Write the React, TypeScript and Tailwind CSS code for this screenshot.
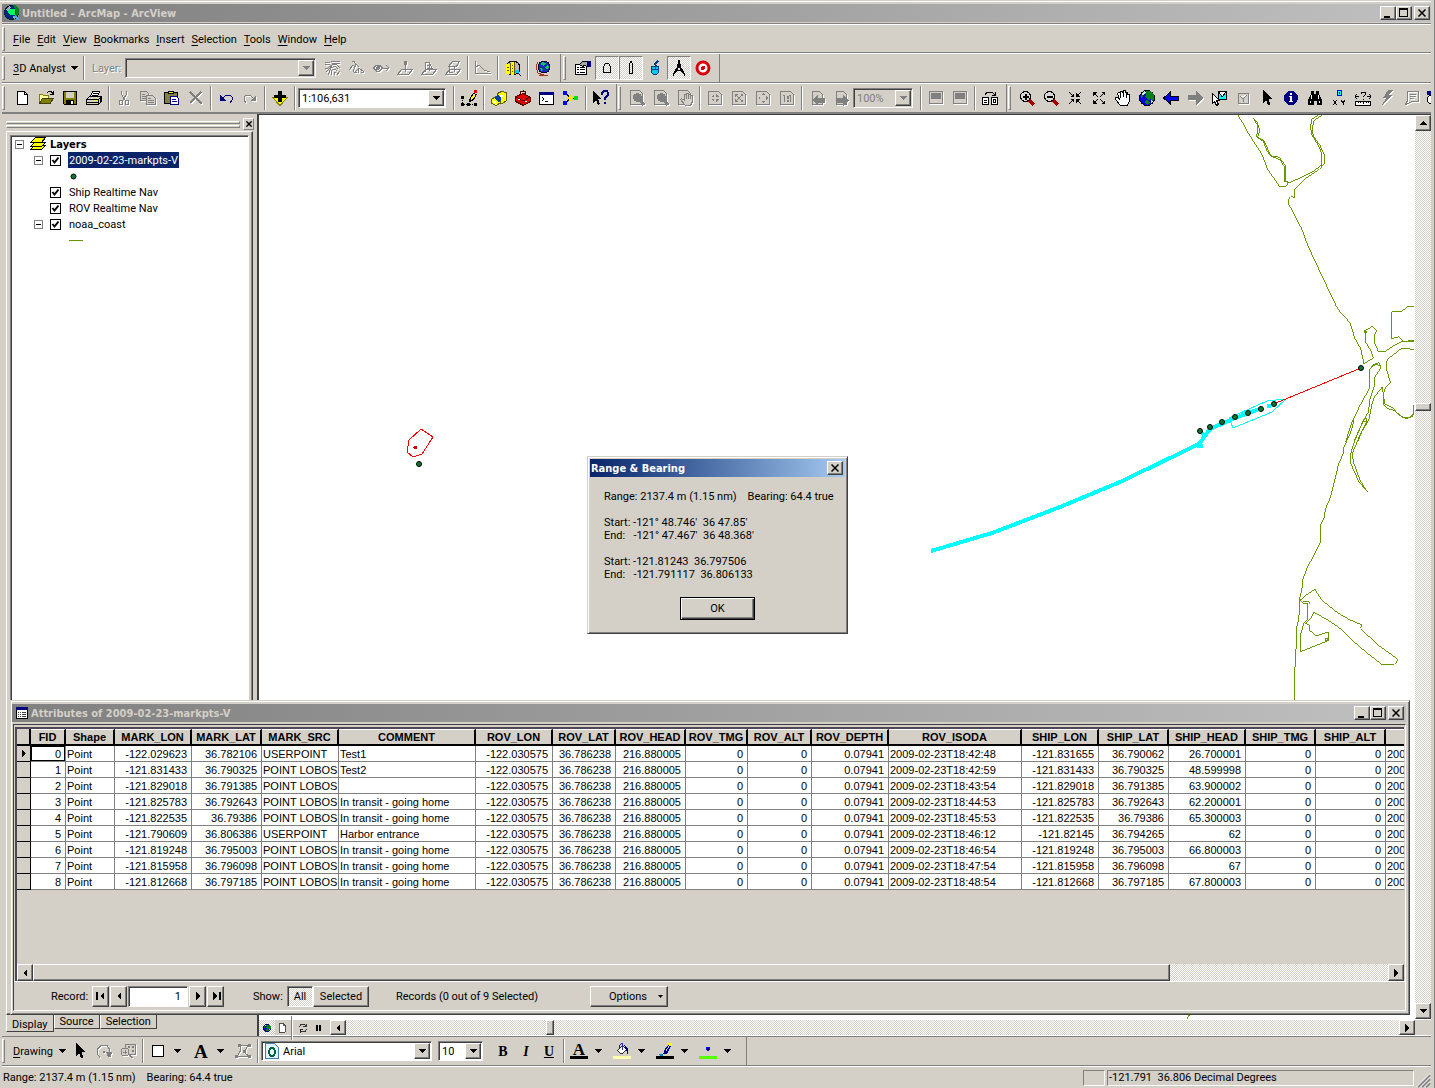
import { useState } from "react";
import type { ReactNode } from "react";

const RAISED =
  "border border-b-[#404040] border-l-white border-r-[#404040] border-t-white bg-[#d4d0c8] shadow-[inset_-1px_-1px_0_#808080]";
const SUNKEN =
  "border border-b-white border-l-[#808080] border-r-white border-t-[#808080] shadow-[inset_1px_1px_0_#404040]";
const DITHER =
  "bg-[repeating-conic-gradient(#fff_0_25%,#d4d0c8_0_50%)] bg-[length:2px_2px]";

const page = <path d="M3.5 1.5h7l3 3v10h-10z" fill="#d4d0c8" stroke="#808080" />;
const magnifier = (
  <>
    <path d="M10 10l5 5" stroke="#a00" strokeWidth="3" />
    <circle cx="6.5" cy="6.5" r="5" fill="#d8d8d8" stroke="#000" />
  </>
);
const globe = (
  <>
    <circle cx="8" cy="8" r="7.5" fill="#0000d8" stroke="#000" />
    <path d="M7 1h5l3 4v4l-2 2-1-2-3 1-1-2-2-1 1-2-2-2zM3 3l2 1-1 3-2 1zM7 10l3 1 1 2-3 2-2-2z" fill="#008020" />
    <path d="M2 4l3-3 2 1-3 3zM12 10l2 1-2 3z" fill="#c8e8d8" />
  </>
);

const ICONS: Record<string, ReactNode> = {
  app: (
    <>
      <circle cx="7.5" cy="7.5" r="7" fill="#00287c" stroke="#002040" />
      <path d="M9 0h3l3 4v5l-4 3 1-6z" fill="#008020" />
      <path d="M1 5l4-4 2 1-3 4zM9 11l3 1-2 2z" fill="#aaa" />
      <path d="M5 4h6v6H6l-2-3z" fill="#00ff60" />
      <path d="M11 11l4 4" stroke="#4af" strokeWidth="2" />
    </>
  ),
  contour: (
    <path d="M0 2h3l2 1M6 1l4 1 5-1M0 5l4-1 2 2-5 3M7 3l4 1 4-1M1 12l4-4 3-4 4 1 3 3M3 15l3-7 4-2 3 3M6 15l1-5 3-1 2 2M9 15v-3l2 1M12 15l3-4M0 8h2" fill="none" stroke="#808080" />
  ),
  steep: <path d="M0 10l4-5 2 2M4 1l6 6M3 2l3-1M5 13l5-5 5 4M7 4l-3 8M9 9v4M12 12h3M8 12h-2" fill="none" stroke="#808080" />,
  sight: (
    <>
      <path d="M0.5 8l3-3h3l3 3-3 3h-3zM10 8h6M13 5l3 3-3 3" fill="none" stroke="#808080" />
      <circle cx="5" cy="8" r="2" fill="#808080" />
    </>
  ),
  pin: (
    <>
      <path d="M0.5 14.5l4-5h11l-4 5zM8.5 2v10" fill="none" stroke="#808080" />
      <circle cx="8.5" cy="3" r="2" fill="#808080" />
    </>
  ),
  pinLine: (
    <path d="M0.5 14.5l4-5h11l-4 5zM4.5 2v10M4 2h4l4 8M6 5h4M6 8h5M8 3v8" fill="none" stroke="#808080" />
  ),
  pinArea: <path d="M0.5 14.5l4-5h11l-4 5zM3.5 6.5l4-5h7l-3 5zM4 7v5h4M9 7v5" fill="none" stroke="#808080" />,
  profile: <path d="M0.5 1v12.500h15M1 7l3-2 5 5 6 2" fill="none" stroke="#808080" />,
  analysis: (
    <>
      <circle cx="8" cy="8" r="7" fill="#b8b8b8" stroke="#000" />
      <path d="M1 4h4v10H1zM6 2h3v13H6z" fill="#ffff00" />
      <path d="M5.500 3v11M9.500 2v12M2 7.500h2M2 10.500h2M7 5.500h1M7 8.500h1M7 11.500h1" fill="none" stroke="#605000" />
      <path d="M10 10h4v3h-4z" fill="#00ccff" />
      <path d="M13 13l3 3" stroke="#0000c0" />
    </>
  ),
  scene: (
    <>
      <path d="M3 2l-2 4 2 7 5 2h5M4 15h9M8 14v2" fill="none" stroke="#a03020" />
      <circle cx="9" cy="7" r="6" fill="#1030b0" stroke="#003" />
      <path d="M7 2l4 1-2 3-3-1zM12 5l2 2-2 3-2-2zM5 8l3 1-1 3z" fill="#0c6" />
    </>
  ),
  props: (
    <>
      <path d="M0.500 4.500h11v10h-11z" fill="#fff" stroke="#000" />
      <path d="M2 7.500h2M5 7.500h5M2 9.500h2M5 9.500h5M2 12.500h2M5 12.500h5" stroke="#000" />
      <path d="M4.500 4.500l3-3h5v5l-3-1-2 1z" fill="#a8a8a8" stroke="#000" />
      <path d="M13 1h3v6h-3z" fill="#000080" />
    </>
  ),
  ship: <path d="M4.500 12.500v-6l2-3h3l2 3v6z" fill="none" stroke="#000" />,
  rov: <path d="M6.500 13.500v-9l1-3h1l1 3v9z" fill="none" stroke="#000" />,
  mouse: (
    <>
      <path d="M11 1l-3 3 1 2" fill="none" stroke="#004080" strokeWidth="2" />
      <path d="M4.500 6.500h7v6l-2 2h-3l-2-2z" fill="#00c8e8" stroke="#004080" />
      <path d="M5 9.500h6M8.500 6v3" stroke="#0040a0" />
    </>
  ),
  compass: (
    <>
      <path d="M7 0h2v4H7zM6 4h4v4H6z" fill="#000" />
      <path d="M7 7l-4 7M9 7l4 7" stroke="#000" strokeWidth="2" />
      <path d="M4 10.500h8M2.500 13v3M13.500 13v3" stroke="#000" />
    </>
  ),
  target: (
    <>
      <circle cx="8" cy="8" r="6" fill="#fff" stroke="#d8000c" strokeWidth="3" shapeRendering="auto" />
      <circle cx="8" cy="8" r="2" fill="#d8000c" />
    </>
  ),
  newDoc: (
    <>
      <path d="M3.500 1.500h7l3 3v10h-10z" fill="#fff" stroke="#000" />
      <path d="M10.500 1.500v3h3" fill="none" stroke="#000" />
    </>
  ),
  open: (
    <>
      <path d="M1.500 13.500v-9h3l1 1h5v3" fill="#ff9" stroke="#808000" />
      <path d="M1.500 13.500l3-5h11l-3.500 5z" fill="#808000" stroke="#404000" />
      <path d="M9 3l2-1.500h2l2 2M15.500 1v3.500H12" fill="none" stroke="#000" />
    </>
  ),
  save: (
    <>
      <path d="M1.500 1.500h13v13h-12l-1-1z" fill="#808000" stroke="#000" />
      <path d="M4 2h8v6H4z" fill="#d4d0c8" />
      <path d="M4 10h8v4H4z" fill="#000" />
      <path d="M9 11h2v3H9z" fill="#fff" />
    </>
  ),
  print: (
    <>
      <path d="M4.500 6.500l2-5h7l-2 5z" fill="#fff" stroke="#000" />
      <path d="M7 3h5M6 5h5" stroke="#000" />
      <path d="M0.500 9.500l3-3h12v5l-3 3h-12z" fill="#d4d0c8" stroke="#000" />
      <path d="M1 9.500h11.500v5M12.500 9.500l3-3M1 12h11M14.500 8v5" fill="none" stroke="#000" />
      <path d="M8 10h3v1H8z" fill="#ff0" />
    </>
  ),
  cut: (
    <path d="M5.500 1v3l4 7M10.500 1v3l-4 7M3.500 10.500h3v4h-3zM9.500 10.500h3v4h-3z" fill="none" stroke="#808080" />
  ),
  copy: (
    <>
      <path d="M0.500 1.500h6l2 2v7h-8z" fill="#d4d0c8" stroke="#808080" />
      <path d="M6.500 5.500h6l3 3v6h-9z" fill="#d4d0c8" stroke="#808080" />
      <path d="M2 4.500h3M2 6.500h4M2 8.500h4M8 8.500h3M8 10.500h6M8 12.500h6" stroke="#808080" />
    </>
  ),
  paste: (
    <>
      <path d="M0.500 2.500h13v11h-13z" fill="#808040" stroke="#000" />
      <path d="M4.500 3.500v-2h5v2z" fill="#ff0" stroke="#000" />
      <path d="M6.500 6.500h6l2 2v6h-8z" fill="#fff" stroke="#000080" />
      <path d="M8 9.500h4M8 11.500h5" stroke="#000080" />
    </>
  ),
  del: <path d="M2 2l12 12M13 2L2 13" fill="none" stroke="#808080" strokeWidth="2" />,
  undo: (
    <>
      <path d="M5 8l3-3h4l2 2v3l-2 3" fill="none" stroke="#000080" />
      <path d="M2 5v6h6z" fill="#000080" />
    </>
  ),
  redo: (
    <>
      <path d="M11 8L8 5H4L2 7v3l2 3" fill="none" stroke="#808080" />
      <path d="M14 5v6H8z" fill="#808080" />
    </>
  ),
  add: (
    <>
      <path d="M0.500 7.500h15l-7.500 8z" fill="#ffff00" stroke="#808000" />
      <path d="M6 1h4v4h4v3h-4v4H6V8H2V5h4z" fill="#000" />
    </>
  ),
  editor: (
    <>
      <path d="M1.500 6v8.500H15" fill="none" stroke="#000" strokeDasharray="1 1" />
      <path d="M0 6h3v3H0zM0 13h3v3H0zM6 13h3v3H6zM13 13h3v3h-3z" fill="#000" />
      <path d="M8.500 11.500l1-4 3-4 3 1-3 5z" fill="#ff0" stroke="#000" />
      <path d="M13 0h3v3h-3z" fill="#e00000" />
    </>
  ),
  catalog: (
    <>
      <path d="M6.500 3.500l4-2 5 1v8l-4 3-5-1z" fill="#ffff00" stroke="#606000" />
      <path d="M0.500 9.500l4-3 5 2v4l-4 3-5-2z" fill="#ffff00" stroke="#606000" />
      <path d="M4 7l3-2 3 2v4l-3 1-2-2z" fill="#0040a0" />
      <path d="M2 11h3v2H2zM9 5h3v2H9z" fill="#fff" />
    </>
  ),
  toolbox: (
    <>
      <path d="M0.500 6.500l8-3 7 4v4l-7 4-8-4z" fill="#e00000" stroke="#600000" />
      <path d="M1 7l7 4 7-4M5.500 4V2l3-1 2 1v3" fill="none" stroke="#500000" />
      <path d="M3 9h2v1H3zM10 11h2v1h-2z" fill="#fff" />
    </>
  ),
  cmd: (
    <>
      <path d="M0.500 2.500h14v12h-14z" fill="#fff" stroke="#000" />
      <path d="M0 2h15v3H0z" fill="#000080" />
      <path d="M3 7l2 2-2 2" fill="none" stroke="#000" />
      <path d="M6 11h3v1H6z" />
    </>
  ),
  model: (
    <>
      <path d="M4 4l3 4-3 4M7 8h6" fill="none" stroke="#000" />
      <path d="M0 1h4v4H0zM0 11h4v4H0z" fill="#0000f0" />
      <path d="M4 8l3-3 3 3-3 3z" fill="#ffe000" />
      <circle cx="13" cy="8" r="2.500" fill="#00e000" />
    </>
  ),
  help: (
    <>
      <path d="M0 1v12l3-3 2 5 2-1-2-5h4z" fill="#000" />
      <path d="M9 5V3l2-2h3l1 2v2l-3 3v2M12 12v2" fill="none" stroke="#000080" strokeWidth="2" />
    </>
  ),
  pageZoom: (
    <>
      <path d="M1.500 0.500h9l3 3v11h-12z" fill="#d4d0c8" stroke="#808080" />
      <circle cx="8.500" cy="7.500" r="4.500" fill="#808080" />
      <path d="M11 10l4 5" stroke="#808080" strokeWidth="3" />
    </>
  ),
  pagePan: (
    <>
      <path d="M1.500 0.500h9l3 3v11h-12z" fill="#d4d0c8" stroke="#808080" />
      <path d="M8.500 15.500l-5-6 1-1 3 2V4.500h2v-1h2v1h2v1h2v6l-2 4z" fill="#d4d0c8" stroke="#808080" />
      <path d="M9.500 5v4M11.500 5v4M13.500 6v3" stroke="#808080" />
    </>
  ),
  pageIn: (
    <>
      <path d="M1.500 1.500h10l3 3v10h-13z" fill="#d4d0c8" stroke="#808080" />
      <path d="M7 4v3H4zM9 4v3h3zM4 9h3v3zM9 9h3l-3 3z" fill="#808080" />
    </>
  ),
  pageOut: (
    <>
      <path d="M1.500 1.500h10l3 3v10h-13z" fill="#d4d0c8" stroke="#808080" />
      <path d="M4 4h3L4 7zM9 4h3v3zM4 9v3h3zM12 9v3H9z" fill="#808080" />
      <path d="M5 5l6 6M11 5l-6 6" stroke="#808080" />
    </>
  ),
  pageFull: (
    <>
      <path d="M1.500 1.500h10l3 3v10h-13z" fill="#d4d0c8" stroke="#808080" />
      <path d="M6 5l2-2 2 2zM6 11l2 2 2-2zM5 6L3 8l2 2zM11 6l2 2-2 2z" fill="#808080" />
    </>
  ),
  pageOne: (
    <>
      <path d="M1.500 1.500h10l3 3v10h-13z" fill="#d4d0c8" stroke="#808080" />
      <path d="M4 5.500h1.500V12M8 6h1v2H8zM8 10h1v1H8zM10 5.500h1.500V12" fill="none" stroke="#808080" />
    </>
  ),
  pageBack: (
    <>
      {page}
      <path d="M3 10l6-5v3h7v5H9v3z" fill="#808080" />
    </>
  ),
  pageNext: (
    <>
      {page}
      <path d="M16 10l-6-5v3H3v5h7v3z" fill="#808080" />
    </>
  ),
  draft: (
    <>
      <path d="M1.500 1.500h13v12h-13z" fill="#d4d0c8" stroke="#808080" />
      <path d="M3 3h10v6H3z" fill="#808080" />
    </>
  ),
  swap: (
    <>
      <path d="M0.500 7.500h6v7h-6zM9.500 7.500h6v7h-6z" fill="#fff" stroke="#000" />
      <path d="M2 10.500h3M2 12.500h3M11.500 9.500h2v3h-2zM3 5l2-3h5l3 3M13.500 2v3.500H10" fill="none" stroke="#000" />
    </>
  ),
  zoomIn: (
    <>
      {magnifier}
      <path d="M4 6h5v1H4zM6 4h1v5H6z" stroke="#000" />
    </>
  ),
  zoomOut: (
    <>
      {magnifier}
      <path d="M4 6h5v1H4z" stroke="#000" />
    </>
  ),
  fixedIn: (
    <>
      <path d="M7 3v4H3zM9 3v4h4zM3 9h4v4zM9 9h4l-4 4z" fill="#000" />
      <path d="M2 2l4 4M14 2l-4 4M2 14l4-4M14 14l-4-4" stroke="#000" />
    </>
  ),
  fixedOut: (
    <>
      <path d="M2 2h4L2 6zM10 2h4v4zM2 10v4h4zM14 10v4h-4z" fill="#000" />
      <path d="M3 3l4 4M13 3L9 7M3 13l4-4M13 13l-4-4" stroke="#000" />
    </>
  ),
  pan: (
    <>
      <path d="M5.500 15.500l-5-6v-2h2l2 2-2-6 1-1h1l1 1V1.500h2v1l1-2h2v2h2v2h2v6l-2 5z" fill="#fff" stroke="#000" />
      <path d="M5.500 3v5M8.500 2v5M11.500 3v5" stroke="#000" />
    </>
  ),
  full: globe,
  back: <path d="M0.500 8l7-6v4h8v4h-8v4z" fill="#0000f0" stroke="#000" />,
  next: <path d="M16 8L9 1v4H1v5h8v5z" fill="#808080" />,
  selFeat: (
    <>
      <path d="M7.500 1.500h8v8h-8z" fill="#0ff" stroke="#000" />
      <path d="M8 2l3 5 4-5" fill="#fff" stroke="#000" />
      <path d="M1.500 3.500v10l2-2 2 4 2-1-2-4h3z" fill="#fff" stroke="#000" />
    </>
  ),
  clearSel: <path d="M3.500 3.500h10v10h-10zM5 6l3 3 4-4M8 9v3" fill="#d4d0c8" stroke="#808080" />,
  pointer: <path d="M4 0v13l3-3 2 5h2V13L9.500 9H13z" fill="#000" />,
  info: (
    <>
      <circle cx="8" cy="8" r="7" fill="#000080" />
      <path d="M7 3h2v2H7zM6 6h3v5h1v1H6v-1h1V7H6z" fill="#fff" />
    </>
  ),
  find: (
    <>
      <path d="M4 1h3v3h2V1h3v3l3 6v5h-5v-4H7v4H1v-5l3-6z" fill="#000" />
      <path d="M4.500 5v4M3.500 11v2M11.500 5v4M12.500 11v2" stroke="#fff" />
    </>
  ),
  goXY: (
    <>
      <path d="M6.500 0.500h4v5h-4z" fill="#0ff" stroke="#00f" />
      <path d="M8 2h1v2H8z" fill="#000" />
      <path d="M2 10l4 5M6 10l-4 5M10 10l2 3M14 10l-2 3v2" fill="none" stroke="#000" />
    </>
  ),
  measure: (
    <>
      <path d="M0 6.500h4M2 4L0 6.500 2 9M12 6.500h4M14 4l2 2.500L14 9M6 4V2h4v3L8 7M8 9v1" fill="none" stroke="#000" />
      <path d="M0.500 11.500h15v4H0.500z" fill="#fff" stroke="#000" />
      <path d="M3.500 11v2M5.500 11v2M8.500 11v3M11.500 11v2M13.500 11v2" stroke="#000" />
    </>
  ),
  bolt: <path d="M9 0h5l-4 5h3L3 15l4-7H4z" fill="#808080" />,
  popup: <path d="M4.500 1.500h11v10h-6l-7 3 2-4zM7 4.500h6M7 6.500h6M7 8.500h4" fill="none" stroke="#808080" />,
  clock: (
    <>
      <path d="M0 1h9v4H0z" fill="#000080" />
      <circle cx="5" cy="9.500" r="4.500" fill="#fff" stroke="#000" />
    </>
  ),
  rotate: (
    <>
      <path d="M4 14.500L1.500 11V6l4-4h5l3 4v3" fill="none" stroke="#808080" />
      <path d="M10 9h6l-1 5h-3zM7 8h2v2H7z" fill="#808080" />
    </>
  ),
  zoomSel: (
    <>
      <path d="M5.500 1.500h10v10h-10z" fill="#d4d0c8" stroke="#808080" />
      <path d="M8 3h2v2H8zM12 3h2v2h-2zM12 7h2v2h-2z" fill="#808080" />
      <circle cx="5" cy="9" r="4" fill="#d4d0c8" stroke="#808080" />
      <path d="M3 9.500h4M5.500 7v4M9 12l4 3" stroke="#808080" />
    </>
  ),
  rect: <path d="M2.500 2.500h11v11h-11z" fill="#fff" stroke="#000" />,
  vertices: (
    <>
      <path d="M5 2.500h8L9 9l5 4.500H2l3-5z" fill="none" stroke="#808080" />
      <path d="M3 1h3v3H3zM13 1h3v3h-3zM8 7h3v3H8zM13 12h3v3h-3zM0 12h3v3H0z" fill="#808080" />
    </>
  ),
  fill: (
    <>
      <path d="M2.500 9.500l6-6 5 5-5 5h-2z" fill="#fff" stroke="#000" />
      <path d="M5.500 7V2l3-1.500v8" fill="none" stroke="#000080" />
      <path d="M11 3l4 3v8l-2-5z" fill="#000080" />
    </>
  ),
  brush: (
    <>
      <path d="M6 13l2-6 4-5 3 2-3 7-3 3z" fill="#000080" />
      <path d="M11 0h5v4h-3z" fill="#ffff00" />
      <path d="M9 10l4-6" stroke="#fff" />
      <path d="M0 14h3v1h3" fill="none" stroke="#0080c0" strokeWidth="2" />
    </>
  ),
  marker: (
    <>
      <circle cx="8" cy="7" r="2.500" fill="#00f" />
      <path d="M7 6h2v2H7z" fill="#000060" />
    </>
  ),
  layers: (
    <>
      <path d="M0.500 13.500l4-4h11l-4 4z" fill="#ff0" stroke="#000" />
      <path d="M0.500 10.500l4-4h11l-4 4z" fill="#ff0" stroke="#000" />
      <path d="M0.500 6.500l5-5h10l-4 5z" fill="#ff0" stroke="#000" />
    </>
  ),
  table: (
    <>
      <path d="M0 0h16v16H0z" fill="#000" />
      <path d="M1 4h13v11H1z" fill="#fff" />
      <path d="M0 0h16v4H0z" fill="#000080" />
      <path d="M2 7h12M2 10h12M2 13h12" stroke="#000" strokeDasharray="2 1" />
    </>
  ),
  font: (
    <>
      <path d="M1.500 0.500h9l4 4v11h-13z" fill="#e4f0ff" stroke="#4080c0" />
      <ellipse cx="8" cy="9" rx="3" ry="4" fill="none" stroke="#063" strokeWidth="2" />
    </>
  ),
  refresh: <path d="M3 7l2-4h5l2 2M12 2v4H8M13 9l-2 4H6l-2-2M4 14v-4h4" fill="none" stroke="#000" />,
  pause: <path d="M4 4h2v8H4zM8 4h2v8H8z" fill="#000" />,
};

function Icon({ name, className = "size-4" }: { name: string; className?: string }) {
  return (
    <svg viewBox="0 0 16 16" shapeRendering="crispEdges" className={`shrink-0 ${className}`} aria-hidden="true">
      {ICONS[name]}
    </svg>
  );
}

function Tool({ name, off, pressed }: { name: string; off?: boolean; pressed?: boolean }) {
  return (
    <button
      type="button"
      aria-label={name}
      disabled={off}
      className={`flex size-6 shrink-0 items-center justify-center ${
        pressed ? `${DITHER} border border-b-white border-l-[#808080] border-r-white border-t-[#808080]` : ""
      }`}
    >
      <Icon name={name} className={off ? "size-4 drop-shadow-[1px_1px_0_#fff]" : "size-4"} />
    </button>
  );
}

function Tools({ names, off }: { names: string[]; off?: boolean }) {
  return (
    <>
      {names.map((name, i) => (
        <Tool key={i} name={name} off={off} />
      ))}
    </>
  );
}

function Sep() {
  return (
    <div className="flex h-6 w-1.5 shrink-0 justify-center">
      <div className="w-0.5 border-l border-r border-l-[#808080] border-r-white" />
    </div>
  );
}

function Grip() {
  return (
    <div className="h-6 w-[3px] shrink-0 border border-b-[#808080] border-l-white border-r-[#808080] border-t-white" />
  );
}

function Caret({ color = "#000" }: { color?: string }) {
  return (
    <svg viewBox="0 0 8 4" className="h-1 w-2 shrink-0" shapeRendering="crispEdges" aria-hidden="true">
      <path d="M0 0h8L4 4z" fill={color} />
    </svg>
  );
}

const TURN = { up: "rotate-180", down: "", left: "rotate-90", right: "-rotate-90" };

function ScrollButton({ dir, className }: { dir: keyof typeof TURN; className: string }) {
  return (
    <button type="button" aria-label={`Scroll ${dir}`} className={`flex shrink-0 items-center justify-center ${RAISED} ${className}`}>
      <span className={`flex ${TURN[dir]}`}>
        <Caret />
      </span>
    </button>
  );
}

function Combo({
  label,
  value,
  off,
  icon,
  className,
}: {
  label: string;
  value: string;
  off?: boolean;
  icon?: string;
  className: string;
}) {
  return (
    <div className={`flex h-5 shrink-0 items-stretch p-px ${SUNKEN} ${off ? "bg-[#d4d0c8] text-[#808080]" : "bg-white"} ${className}`}>
      {icon && <Icon name={icon} className="mx-px size-4" />}
      <select aria-label={label} disabled={off} className="min-w-0 flex-1 appearance-none bg-transparent pl-0.5 outline-none">
        <option>{value}</option>
      </select>
      <span className={`flex w-4 shrink-0 items-center justify-center ${RAISED}`}>
        <Caret color={off ? "#808080" : "#000"} />
      </span>
    </div>
  );
}

function WindowButtons() {
  const base = `flex h-3.5 w-4 items-center justify-center ${RAISED}`;
  return (
    <div className="flex shrink-0 items-center">
      <button type="button" aria-label="Minimize" className={base}>
        <svg viewBox="0 0 10 10" className="size-2.5">
          <path d="M1 8h6v2H1z" />
        </svg>
      </button>
      <button type="button" aria-label="Maximize" className={base}>
        <svg viewBox="0 0 10 10" className="size-2.5" shapeRendering="crispEdges">
          <path d="M0 0h9v9H0zM1 2v6h7V2z" fillRule="evenodd" />
        </svg>
      </button>
      <button type="button" aria-label="Close" className={`ml-0.5 ${base}`}>
        <Cross />
      </button>
    </div>
  );
}

function Cross() {
  return (
    <svg viewBox="0 0 8 8" className="size-2" aria-hidden="true">
      <path d="M0.500 0.500l7 7M7.500 0.500l-7 7" stroke="#000" strokeWidth="1.500" />
    </svg>
  );
}

const MENUS = ["File", "Edit", "View", "Bookmarks", "Insert", "Selection", "Tools", "Window", "Help"];

function MenuLabel({ text }: { text: string }) {
  return (
    <span>
      <span className="underline underline-offset-2">{text[0]}</span>
      {text.slice(1)}
    </span>
  );
}

function LayerRow({ name, open, selected }: { name: string; open?: boolean; selected?: boolean }) {
  return (
    <div className="flex h-4 items-center pl-[23px]">
      <span className="w-4 shrink-0">{open && <Expander />}</span>
      <label className="flex h-4 items-center">
        <span className="relative size-[11px]">
          <input type="checkbox" defaultChecked className="block size-[11px] appearance-none border border-black bg-white" />
          <svg viewBox="0 0 11 11" className="pointer-events-none absolute inset-0 size-[11px]" aria-hidden="true">
            <path d="M2.500 5l2 2.500 4-5" fill="none" stroke="#000" strokeWidth="2" />
          </svg>
        </span>
        <span className={`ml-[7px] flex h-4 items-center px-px ${selected ? "bg-[#0a246a] text-white" : ""}`}>{name}</span>
      </label>
    </div>
  );
}

function Expander() {
  return (
    <svg viewBox="0 0 9 9" className="size-[9px]" shapeRendering="crispEdges" aria-hidden="true">
      <path d="M0.500 0.500h8v8h-8z" fill="#fff" stroke="#808080" />
      <path d="M2 4h5v1H2z" />
    </svg>
  );
}

function Contents() {
  return (
    <aside className="flex w-[255px] shrink-0 flex-col pl-1.5">
      <div className="flex h-4 items-end gap-[3px] pr-px">
        <div className="flex flex-1 flex-col gap-px pb-0.5">
          <div className="h-[3px] border border-b-[#808080] border-r-[#808080] border-white" />
          <div className="h-[3px] border border-b-[#808080] border-r-[#808080] border-white" />
        </div>
        <button type="button" aria-label="Close contents" className="flex h-3 w-[11px] items-center justify-center border border-b-[#808080] border-l-white border-r-[#808080] border-t-white">
          <svg viewBox="0 0 8 8" className="size-1.5" aria-hidden="true">
            <path d="M0.500 0.500l7 7M7.500 0.500l-7 7" stroke="#000" strokeWidth="2" />
          </svg>
        </button>
      </div>
      <div className={`mr-0.5 mt-px flex flex-1 flex-col p-[3px] ${RAISED}`}>
        <div className={`flex-1 bg-white ${SUNKEN}`}>
          <div className="flex h-4 items-center pl-1">
            <Expander />
            <Icon name="layers" className="ml-1.5 size-4" />
            <span className="ml-1 font-['DejaVu_Sans_Condensed','Noto_Sans',sans-serif] font-bold">Layers</span>
          </div>
          <LayerRow name="2009-02-23-markpts-V" open selected />
          <div className="flex h-4 items-center pl-[59px]">
            <svg viewBox="0 0 7 7" className="size-[7px]" aria-hidden="true">
              <circle cx="3.500" cy="3.500" r="2.500" fill="#087830" stroke="#000" />
            </svg>
          </div>
          <LayerRow name="Ship Realtime Nav" />
          <LayerRow name="ROV Realtime Nav" />
          <LayerRow name="noaa_coast" open />
          <div className="flex h-4 items-center pl-[58px]">
            <div className="h-px w-3.5 bg-[#669900]" />
          </div>
        </div>
      </div>
      <div className="flex h-[21px] items-start">
        {["Display", "Source", "Selection"].map((tab, i) => (
          <button
            type="button"
            key={tab}
            className={`border border-t-0 border-b-[#404040] border-l-white border-r-[#404040] px-[5px] ${i === 0 ? "h-[17px] pt-0.5" : "h-3.5"}`}
          >
            {tab}
          </button>
        ))}
      </div>
    </aside>
  );
}

const MARKS = [
  [1200, 431],
  [1210, 427],
  [1222, 422],
  [1235, 417],
  [1248, 413],
  [1261, 409],
  [1274, 404],
  [1361, 368],
  [419, 464],
];

function MapView() {
  return (
    <svg viewBox="259 115 1155 904" className="block h-[904px] w-[1155px] shrink-0" shapeRendering="crispEdges" aria-label="Map">
      {/* coastline, digitised at three units per pixel */}
      <g fill="none" stroke="#669900" strokeWidth="3">
        <g transform="translate(1180 112) scale(0.33333)">
          <path d="M173 8L190 36L200 56L225 95L245 125L262 170L298 223H318L325 212L313 207L313 165L300 143L272 132L262 118L250 88L232 76L240 55L230 28L220 18" />
          <path d="M220 18L234 42L230 74L252 86L272 131L298 136L316 160L318 208L330 212" />
          <path d="M415 8L396 22L391 45L396 70L412 95L426 125V158L400 178L330 212" />
          <path d="M425 10L402 26L396 50L400 72L420 100L434 130V155L418 172L372 203L345 232V256L332 254L325 262L327 278L365 350L385 405L402 440L425 490L470 585L482 602L510 632L525 680L542 710L552 755L580 738L572 715L558 692L556 656L577 643L590 655L583 672L585 695L595 718H615L650 696L668 688L702 686" />
          <path d="M553 656h6v6h-6z" />
          <path d="M702 583H685L662 600H635V680L658 674L670 690H702" />
          <path d="M702 712L665 709L622 742L618 765L631 812L618 825L610 845L614 875L640 888L655 908L680 920L696 914L702 905" />
          <path d="M607 825L612 860V880L625 890L645 896L665 915L685 918L700 906V880" />
          <path d="M497 990L512 940L540 880L568 830V775L580 758L598 752L602 768L585 795L582 825L570 860L565 900L548 930L530 970L522 990" />
          <path d="M574 764L590 756L600 762M607 825L583 855L575 880L566 925L545 960L533 990M552 920h8v8h-8z" />
        </g>
        <g transform="translate(1180 420) scale(0.33333)">
          <path d="M522 0L512 38L490 85V100L475 135L462 190L452 230L437 265L432 295L421 315V368L405 400L382 442L368 480L366 505L359 535V560L356 600L350 620V685L346 690V740L343 745V840" />
          <path d="M552 0L540 25L525 60L513 98L512 130L535 182L555 208L565 218M560 5L540 45L517 100L520 125L540 180L560 213" />
          <path d="M361 540L385 520L405 508L425 540L475 580L510 600L530 608L546 615L542 625L590 672L640 708L655 720L643 733H605L560 698L516 660L480 625L440 598L402 577L393 595L376 610L388 615L390 632L410 648L430 640L445 637V662L362 695L361 645L372 610L384 598L382 550H370L361 540" />
          <path d="M370 545H388V553M436 655h8v8h-8z" />
        </g>
      </g>
      <path d="M1187 1019l3-5" stroke="#669900" />
      <g fill="none" stroke="#00ffff">
        <path d="M931 551L992 533L1060 507L1120 482L1170 458L1199 444L1210 429L1235 418L1262 408M1267 406h4M1200 431l5 5M1197 446h6" strokeWidth="4" />
        <path d="M1229 418L1267 401L1286 399L1272 412L1233 428Z" />
      </g>
      <path d="M1276 403L1361 368M421 429L433 437L422 454L413 457L407 452L409 440Z" fill="none" stroke="#f00" />
      <circle cx="415.500" cy="447.500" r="2" fill="#c00" />
      {MARKS.map(([x, y]) => (
        <circle key={x} cx={x} cy={y} r="2.500" fill="#087830" stroke="#000" shapeRendering="auto" />
      ))}
    </svg>
  );
}

// "l" columns are left aligned, the rest are numbers
const COLUMNS: [string, string, string?][] = [
  ["FID", "w-[35px]"],
  ["Shape", "w-[49px]", "l"],
  ["MARK_LON", "w-[77px]"],
  ["MARK_LAT", "w-[70px]"],
  ["MARK_SRC", "w-[77px]", "l"],
  ["COMMENT", "w-[137px]", "l"],
  ["ROV_LON", "w-[77px]"],
  ["ROV_LAT", "w-[63px]"],
  ["ROV_HEAD", "w-[70px]"],
  ["ROV_TMG", "w-[62px]"],
  ["ROV_ALT", "w-[64px]"],
  ["ROV_DEPTH", "w-[77px]"],
  ["ROV_ISODA", "w-[133px]", "l"],
  ["SHIP_LON", "w-[77px]"],
  ["SHIP_LAT", "w-[70px]"],
  ["SHIP_HEAD", "w-[77px]"],
  ["SHIP_TMG", "w-[70px]"],
  ["SHIP_ALT", "w-[70px]"],
  ["", "w-[133px]", "l"],
];

const RECORDS = [
  ["-122.029623", "36.782106", "USERPOINT", "Test1", "18:42:48", "-121.831655", "36.790062", "26.700001"],
  ["-121.831433", "36.790325", "POINT LOBOS", "Test2", "18:42:59", "-121.831433", "36.790325", "48.599998"],
  ["-121.829018", "36.791385", "POINT LOBOS", "", "18:43:54", "-121.829018", "36.791385", "63.900002"],
  ["-121.825783", "36.792643", "POINT LOBOS", "In transit - going home", "18:44:53", "-121.825783", "36.792643", "62.200001"],
  ["-121.822535", "36.79386", "POINT LOBOS", "In transit - going home", "18:45:53", "-121.822535", "36.79386", "65.300003"],
  ["-121.790609", "36.806386", "USERPOINT", "Harbor entrance", "18:46:12", "-121.82145", "36.794265", "62"],
  ["-121.819248", "36.795003", "POINT LOBOS", "In transit - going home", "18:46:54", "-121.819248", "36.795003", "66.800003"],
  ["-121.815958", "36.796098", "POINT LOBOS", "In transit - going home", "18:47:54", "-121.815958", "36.796098", "67"],
  ["-121.812668", "36.797185", "POINT LOBOS", "In transit - going home", "18:48:54", "-121.812668", "36.797185", "67.800003"],
];

function cellsFor(r: string[], fid: number) {
  const [lon, lat, src, comment, time, shipLon, shipLat, shipHead] = r;
  return [
    String(fid), "Point", lon, lat, src, comment,
    "-122.030575", "36.786238", "216.880005", "0", "0", "0.07941",
    `2009-02-23T${time}`, shipLon, shipLat, shipHead, "0", "0", "200",
  ];
}

function AttributeTable() {
  return (
    <table className="w-[1501px] table-fixed border-separate border-spacing-0 font-['Liberation_Sans',Arial,sans-serif] text-[11px] leading-[14px]">
      <thead>
        <tr className="h-[17px]">
          <th className="w-3.5 border-b-2 border-r-2 border-black bg-[#d4d0c8] p-0" />
          {COLUMNS.map(([name, width], i) => (
            <th
              key={i}
              className={`overflow-hidden whitespace-nowrap border-b-2 border-r-2 border-t border-b-black border-r-black border-t-white bg-[#d4d0c8] p-0 text-center font-bold ${width}`}
            >
              {name}
            </th>
          ))}
        </tr>
      </thead>
      <tbody>
        {RECORDS.map((r, fid) => (
          <tr key={fid} className="h-4">
            <td className="border-b border-r border-b-black border-r-black bg-[#d4d0c8] p-0">
              {fid === 0 && (
                <span className="flex -rotate-90 justify-center">
                  <Caret />
                </span>
              )}
            </td>
            {cellsFor(r, fid).map((cell, i) => (
              <td
                key={i}
                className={`h-4 overflow-hidden whitespace-nowrap border-b border-r border-[#808080] bg-white py-0 ${
                  COLUMNS[i][2] ? "pl-px text-left" : "pr-1 text-right"
                } ${fid === 0 && i === 0 ? "shadow-[inset_0_0_0_1px_#000]" : ""}`}
              >
                {cell}
              </td>
            ))}
          </tr>
        ))}
      </tbody>
    </table>
  );
}

function AttributesWindow() {
  const [show, setShow] = useState("All");

  return (
    <section className="absolute bottom-[21px] left-[10px] right-[21px] flex h-[315px] flex-col border border-b-[#404040] border-l-[#d4d0c8] border-r-[#404040] border-t-[#d4d0c8] bg-[#d4d0c8] p-[3px] pl-px shadow-[inset_1px_1px_0_#fff,inset_-1px_-1px_0_#808080]">
      <header className="flex h-[18px] items-center bg-linear-to-r from-[#808080] to-[#c0c0c0] pl-1 pr-0.5">
        <Icon name="table" className="size-3" />
        <h2 className="ml-[3px] flex-1 font-['DejaVu_Sans_Condensed','Noto_Sans',sans-serif] font-bold text-[#d4d0c8]">
          Attributes of 2009-02-23-markpts-V
        </h2>
        <WindowButtons />
      </header>
      <div className="ml-px mt-0.5 flex min-h-0 flex-1 flex-col border border-b-white border-l-[#404040] border-r-white border-t-[#404040]">
        <div className="mt-0.5 ml-px mr-px flex min-h-0 flex-1 flex-col border-2 border-b-0 border-r-0 border-[#504858]">
          <div className="flex-1 overflow-hidden">
            <AttributeTable />
          </div>
          <div className={`flex h-[17px] ${DITHER}`}>
            <ScrollButton dir="left" className="w-4" />
            <div className={`w-[82%] ${RAISED}`} />
            <div className="flex-1" />
            <ScrollButton dir="right" className="w-4" />
          </div>
        </div>
        <div className="flex h-[29px] shrink-0 items-center border-t border-white pl-[37px]">
          <label htmlFor="record" className="w-[41px]">
            Record:
          </label>
          <button type="button" aria-label="First record" className={`flex h-[21px] w-[17px] items-center justify-center ${RAISED}`}>
            <span className="h-2 w-0.5 bg-black" />
            <span className="flex rotate-90">
              <Caret />
            </span>
          </button>
          <ScrollButton dir="left" className="ml-px h-[21px] w-[17px]" />
          <input
            id="record"
            defaultValue="1"
            className={`ml-px h-[21px] w-[60px] bg-white px-1.5 text-right outline-none ${SUNKEN}`}
          />
          <ScrollButton dir="right" className="ml-px h-[21px] w-[17px]" />
          <button type="button" aria-label="Last record" className={`ml-px flex h-[21px] w-[17px] items-center justify-center ${RAISED}`}>
            <span className="flex -rotate-90">
              <Caret />
            </span>
            <span className="h-2 w-0.5 bg-black" />
          </button>
          <span className="ml-[29px] w-[34px]">Show:</span>
          {["All", "Selected"].map((mode) => (
            <button
              type="button"
              key={mode}
              aria-pressed={show === mode}
              onClick={() => setShow(mode)}
              className={`h-[21px] ${mode === "All" ? "w-[26px]" : "w-14"} ${show === mode ? `${SUNKEN} ${DITHER}` : RAISED}`}
            >
              {mode}
            </button>
          ))}
          <span className="ml-[27px] w-[194px]">Records (0 out of 9 Selected)</span>
          <button type="button" className={`flex h-[21px] w-[78px] items-center justify-between pl-[18px] pr-1 ${RAISED}`}>
            Options
            <svg viewBox="0 0 5 3" className="h-[3px] w-[5px]" aria-hidden="true">
              <path d="M0 0h5L2.500 3z" />
            </svg>
          </button>
        </div>
      </div>
    </section>
  );
}

function RangeDialog({ onClose }: { onClose: () => void }) {
  return (
    <div
      role="dialog"
      aria-label="Range & Bearing"
      className="absolute left-[587px] top-[342px] flex h-[178px] w-[261px] flex-col border border-b-[#404040] border-l-[#d4d0c8] border-r-[#404040] border-t-[#d4d0c8] bg-[#d4d0c8] p-0.5 shadow-[inset_1px_1px_0_#fff,inset_-1px_-1px_0_#808080]"
    >
      <header className="flex h-[18px] shrink-0 items-center bg-linear-to-r from-[#0a246a] to-[#a6caf0] pl-px pr-0.5">
        <h2 className="flex-1 font-['DejaVu_Sans_Condensed','Noto_Sans',sans-serif] font-bold text-white">Range &amp; Bearing</h2>
        <button type="button" aria-label="Close" onClick={onClose} className={`flex h-3.5 w-4 items-center justify-center ${RAISED}`}>
          <Cross />
        </button>
      </header>
      <pre className="mt-[13px] pl-3.5 font-[Roboto,Tahoma,sans-serif] leading-[13px]">
        {`Range: 2137.4 m (1.15 nm)    Bearing: 64.4 true

Start: -121° 48.746'  36 47.85'
End:   -121° 47.467'  36 48.368'

Start: -121.81243  36.797506
End:   -121.791117  36.806133`}
      </pre>
      <button
        type="button"
        onClick={onClose}
        className="mx-auto mt-4 h-[23px] w-[75px] border border-black shadow-[inset_1px_1px_0_#fff,inset_-1px_-1px_0_#404040,inset_-2px_-2px_0_#808080]"
      >
        OK
      </button>
    </div>
  );
}

function ColorTool({ name, bar, letter }: { name: string; bar: string; letter?: string }) {
  return (
    <button type="button" aria-label={name} className="flex w-[43px] shrink-0 items-center gap-1.5">
      <span className="flex w-[18px] flex-col items-center">
        {letter ? (
          <span className="h-[13px] font-['Liberation_Serif',serif] text-[17px] font-bold leading-[13px]">{letter}</span>
        ) : (
          <Icon name={name} className="h-[13px] w-4" />
        )}
        <span className={`h-[3px] w-[18px] ${bar}`} />
      </span>
      <Caret />
    </button>
  );
}

export default function App() {
  const [dialog, setDialog] = useState(true);

  return (
    <div className="flex h-screen flex-col overflow-hidden border-r border-[#808080] bg-[#d4d0c8] pr-[3px] font-[Roboto,Tahoma,sans-serif] text-[11px] leading-[13px] text-black">
      <div className="mt-px h-[3px] shrink-0 border-t border-white" />
      <header className="ml-0.5 flex h-[18px] shrink-0 items-center bg-linear-to-r from-[#808080] to-[#c0c0c0] pl-0.5 pr-px">
        <Icon name="app" />
        <h1 className="ml-0.5 flex-1 font-['DejaVu_Sans_Condensed','Noto_Sans',sans-serif] font-bold text-[#d4d0c8]">
          Untitled - ArcMap - ArcView
        </h1>
        <WindowButtons />
      </header>
      <div className="ml-0.5 mt-px h-px shrink-0 bg-[#808080]" />

      <nav className="ml-0.5 flex h-[29px] shrink-0 items-center border-b border-t border-b-[#808080] border-t-white">
        <Grip />
        <div className="ml-2 flex gap-[7px] pt-0.5">
          {MENUS.map((menu) => (
            <button type="button" key={menu}>
              <MenuLabel text={menu} />
            </button>
          ))}
        </div>
      </nav>

      <div className="ml-0.5 flex h-[30px] shrink-0 items-center border-b border-t border-b-[#808080] border-t-white">
        <Grip />
        <button type="button" className="flex w-[76px] shrink-0 items-center justify-between pl-2 pr-[3px]">
          <MenuLabel text="3D Analyst" />
          <Caret />
        </button>
        <Sep />
        <span className="w-[38px] shrink-0 pl-[5px] text-[#808080] [text-shadow:1px_1px_0_#fff]">Layer:</span>
        <Combo label="Layer" value="" off className="mr-[5px] w-[191px]" />
        <Tools names={["contour", "steep", "sight", "pin", "pinLine", "pinArea"]} off />
        <Sep />
        <Tool name="profile" off />
        <Sep />
        <Tool name="analysis" />
        <Sep />
        <Tool name="scene" />
        <div className="ml-[5px] mr-0.5 h-full w-px shrink-0 bg-[#808080]" />
        <Grip />
        <div className="ml-[5px] flex h-full items-center border-r border-[#808080] pr-1">
          <Tool name="props" />
          <Tool name="ship" pressed />
          <Tool name="rov" pressed />
          <Tool name="mouse" />
          <Tool name="compass" pressed />
          <Tool name="target" />
        </div>
      </div>

      <div className="ml-0.5 flex h-[31px] shrink-0 items-center overflow-hidden border-b-2 border-t border-b-[#808080] border-t-white">
        <Grip />
        <div className="w-[5px] shrink-0" />
        <Tools names={["newDoc", "open", "save", "print"]} />
        <Sep />
        <Tools names={["cut", "copy"]} off />
        <Tool name="paste" />
        <Tool name="del" off />
        <Sep />
        <Tool name="undo" />
        <Tool name="redo" off />
        <Sep />
        <Tool name="add" />
        <Sep />
        <Combo label="Map scale" value="1:106,631" className="mr-[5px] w-[148px]" />
        <Sep />
        <Tool name="editor" />
        <Sep />
        <Tools names={["catalog", "toolbox", "cmd", "model"]} />
        <Sep />
        <Tool name="help" />
        <div className="ml-[3px] mr-px h-full w-px shrink-0 bg-[#808080]" />
        <Grip />
        <div className="w-1 shrink-0" />
        <Tools names={["pageZoom", "pageZoom", "pagePan"]} off />
        <Sep />
        <Tools names={["pageIn", "pageOut", "pageFull", "pageOne"]} off />
        <Sep />
        <Tools names={["pageBack", "pageNext"]} off />
        <Combo label="Page zoom" value="100%" off className="mr-[5px] w-[60px]" />
        <Sep />
        <Tools names={["draft", "draft"]} off />
        <Sep />
        <Tool name="swap" />
        <div className="ml-1 mr-px h-full w-px shrink-0 bg-[#808080]" />
        <Grip />
        <div className="w-1 shrink-0" />
        <Tools names={["zoomIn", "zoomOut", "fixedIn", "fixedOut", "pan", "full", "back"]} />
        <Tool name="next" off />
        <Tool name="selFeat" />
        <Tool name="clearSel" off />
        <Tools names={["pointer", "info", "find", "goXY", "measure"]} />
        <Tools names={["bolt", "popup"]} off />
        <Tool name="clock" />
      </div>

      <main className="relative flex min-h-0 flex-1">
        <Contents />
        <div className="ml-0.5 flex min-w-0 flex-1 flex-col border-l-2 border-t border-[#404040]">
          <div className="flex min-h-0 flex-1">
            <div className="min-w-0 flex-1 overflow-hidden bg-white">
              <MapView />
            </div>
            <div className={`flex w-4 shrink-0 flex-col ${DITHER}`}>
              <ScrollButton dir="up" className="h-4" />
              <div className="h-[272px]" />
              <div className={`h-2 ${RAISED}`} />
              <div className="flex-1" />
              <ScrollButton dir="down" className="h-4" />
            </div>
          </div>
          <div className="flex h-[17px] shrink-0 items-center border-b border-t border-white pr-4">
            <button type="button" aria-label="Data view" className={`flex h-[15px] w-4 items-center justify-center ${DITHER}`}>
              <Icon name="full" className="size-2" />
            </button>
            <button type="button" aria-label="Layout view" className="flex w-3.5 justify-center">
              <Icon name="newDoc" className="size-2.5" />
            </button>
            <Sep />
            <button type="button" aria-label="Refresh" className="flex w-4 justify-center">
              <Icon name="refresh" className="size-3" />
            </button>
            <button type="button" aria-label="Pause" className="mr-[3px] flex w-4 justify-center">
              <Icon name="pause" className="size-3" />
            </button>
            <div className={`flex h-[15px] flex-1 ${DITHER}`}>
              <ScrollButton dir="left" className="w-4" />
              <div className="w-[200px]" />
              <div className={`w-2 ${RAISED}`} />
              <div className="flex-1" />
              <ScrollButton dir="right" className="w-4" />
            </div>
          </div>
        </div>
        <AttributesWindow />
        {dialog && <RangeDialog onClose={() => setDialog(false)} />}
      </main>

      <div className="ml-0.5 flex h-[30px] shrink-0 items-center border-b border-t border-[#808080]">
        <Grip />
        <button type="button" className="flex w-[63px] shrink-0 items-center justify-between pl-2 pr-0.5">
          <MenuLabel text="Drawing" />
          <Caret />
        </button>
        <Tool name="pointer" />
        <Tools names={["rotate", "zoomSel"]} off />
        <Sep />
        <Tool name="rect" />
        <button type="button" aria-label="Shapes" className="flex w-3.5 justify-center">
          <Caret />
        </button>
        <button type="button" aria-label="New text" className="flex w-[47px] items-center gap-2 pl-2.5 font-['Liberation_Serif',serif] text-[19px] font-bold">
          A
          <Caret />
        </button>
        <Tool name="vertices" off />
        <Sep />
        <Combo label="Font" value="Arial" icon="font" className="mr-1.5 w-[171px]" />
        <Combo label="Font size" value="10" className="mr-2 w-[45px]" />
        <div className="flex font-['Liberation_Serif',serif] text-[14px] font-bold">
          <button type="button" className="w-6">B</button>
          <button type="button" className="w-[22px] italic">I</button>
          <button type="button" className="w-6 underline">U</button>
        </div>
        <Sep />
        <div className="flex h-full items-center border-r border-[#808080] pl-[3px] pr-1">
          <ColorTool name="fontColor" letter="A" bar="bg-black" />
          <ColorTool name="fill" bar="bg-[#ffffb0]" />
          <ColorTool name="brush" bar="bg-black" />
          <ColorTool name="marker" bar="bg-[#55ff00]" />
        </div>
      </div>

      <footer className="ml-0.5 flex h-[22px] shrink-0 items-center border-t border-white">
        <span className="flex-1 whitespace-pre pl-px">{"Range: 2137.4 m (1.15 nm)    Bearing: 64.4 true"}</span>
        <span className="h-4 w-[22px] border border-b-white border-l-[#808080] border-r-white border-t-[#808080]" />
        <span className="ml-0.5 h-4 w-[307px] whitespace-pre border border-b-white border-l-[#808080] border-r-white border-t-[#808080] pl-px">
          {"-121.791  36.806 Decimal Degrees"}
        </span>
        <svg viewBox="0 0 16 16" className="ml-px size-4 self-end" aria-hidden="true">
          <path d="M3 15L15 3M7 15l8-8M11 15l4-4" stroke="#808080" strokeWidth="2" />
          <path d="M1.500 15L15 1.500M5.500 15L15 5.500M9.500 15L15 9.500" stroke="#fff" />
        </svg>
      </footer>
    </div>
  );
}
